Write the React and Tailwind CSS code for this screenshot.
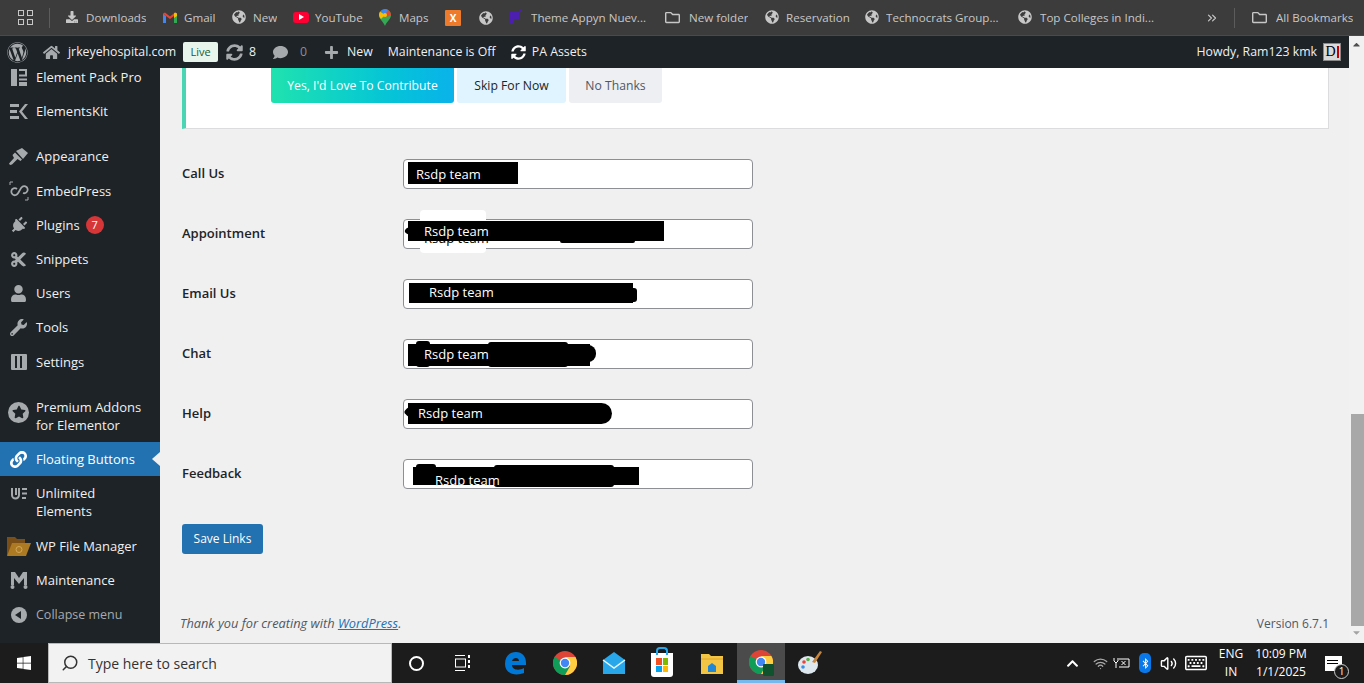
import React from 'react';
import {
  FaWordpress, FaPlug, FaCut, FaUser, FaWrench, FaLink, FaStar, FaPlus, FaComment, FaSyncAlt, FaHome, FaCaretUp, FaCaretDown, FaWindows, FaRegFolder, FaChevronUp, FaBluetoothB, FaRegKeyboard, FaGlobeAmericas, FaDownload,
} from 'react-icons/fa';
import { LuSearch, LuVolume2, LuChevronsRight, LuWifi } from 'react-icons/lu';

const font = 'font-["Open_Sans","Noto_Sans",sans-serif]';

function Globe() {
  return <FaGlobeAmericas className="text-[14px] text-[#c7c7c7] shrink-0" />;
}

function Chrome({ size = 24 }) {
  return (
    <svg width={size} height={size} viewBox="0 0 24 24">
      <circle cx="12" cy="12" r="12" fill="#db4437" />
      <path d="M12 12 1.6 6A12 12 0 0 0 12 24l5.2-9z" fill="#0f9d58" />
      <path d="M12 6h10.4A12 12 0 0 1 12 24l5.2-9z" fill="#ffcd40" />
      <circle cx="12" cy="12" r="5.4" fill="#fff" />
      <circle cx="12" cy="12" r="4.2" fill="#4285f4" />
    </svg>
  );
}

function Bookmarks() {
  const Item = ({ className, icon, text }) => (
    <div className={`flex items-center shrink-0 ${className}`}>
      {icon}
      {text && <span className="truncate">{text}</span>}
    </div>
  );
  return (
    <div className="h-9 bg-[#3c3c3c] border-b border-[#4a4a4a] flex items-center pl-[18px] text-[11.6px] text-[#c7c7c7]">
      <div className="grid grid-cols-2 gap-[3px] w-[15px] shrink-0">
        <span className="h-[6px] border border-[#c7c7c7]" />
        <span className="h-[6px] border border-[#c7c7c7]" />
        <span className="h-[6px] border border-[#c7c7c7]" />
        <span className="h-[6px] border border-[#c7c7c7]" />
      </div>
      <span className="w-px h-5 bg-[#5c5c5c] ml-4 mr-4 shrink-0" />
      <Item className="w-[97px] gap-[8px]" icon={<FaDownload className="text-[12px] shrink-0" />} text="Downloads" />
      <Item className="w-[69px] gap-[7px]" icon={
        <svg width="14" height="11" viewBox="0 0 14 11" className="shrink-0">
          <path d="M0 1.5V11h3V4z" fill="#4285f4" />
          <path d="M14 1.5V11h-3V4z" fill="#34a853" />
          <path d="M0 1.5 2 .5 7 4.5 12 .5 14 1.5 11 4 7 7 3 4z" fill="#ea4335" />
          <path d="M11 1.6 12 .5 14 1.5V4l-3 2z" fill="#fbbc04" />
        </svg>
      } text="Gmail" />
      <Item className="w-[61px] gap-[7px]" icon={<Globe />} text="New" />
      <Item className="w-[86px] gap-[6px]" icon={
        <span className="w-4 h-[11px] rounded-[3px] bg-[#ff0033] flex items-center justify-center shrink-0">
          <span className="border-l-[5px] border-l-white border-y-[3px] border-y-transparent" />
        </span>
      } text="YouTube" />
      <Item className="w-[66px] gap-[8px]" icon={
        <svg width="12" height="17" viewBox="0 0 12 17" className="shrink-0">
          <path d="M6 0a6 6 0 0 1 6 6c0 4-4 6-6 11C4 12 0 10 0 6a6 6 0 0 1 6-6z" fill="#34a853" />
          <path d="M1 2.5 6 6 2 10Q0 8 0 6q0-2 1-3.500z" fill="#fbbc04" />
          <path d="M1.500 2 6 0a6 6 0 0 1 3 1L6 6z" fill="#4285f4" />
          <path d="M9 1a6 6 0 0 1 3 5L8 8 6 6z" fill="#ea4335" />
          <circle cx="6" cy="6" r="2" fill="#fbbc04" />
        </svg>
      } text="Maps" />
      <Item className="w-[34px]" icon={
        <span className="w-4 h-4 bg-[#ee7a2b] rounded-[1px] flex items-center justify-center shrink-0 text-white text-[10px] font-bold leading-none">X</span>
      } />
      <Item className="w-[31px]" icon={<Globe />} />
      <Item className="w-[155px] gap-[9px]" icon={
        <svg width="12" height="14" viewBox="0 0 12 14" className="shrink-0">
          <path d="M0 2h9v7H4v5H0zM4 5v1h1V5z" fill="#4c1fb0" />
          <rect x="10" y="0" width="2" height="2" fill="#4c1fb0" />
        </svg>
      } text="Theme Appyn Nuev..." />
      <Item className="w-[100px] gap-[9px]" icon={<FaRegFolder className="text-[15px] shrink-0" />} text="New folder" />
      <Item className="w-[100px] gap-[7px]" icon={<Globe />} text="Reservation" />
      <Item className="w-[153px] gap-[7px]" icon={<Globe />} text="Technocrats Group..." />
      <Item className="w-[187px] gap-[8px]" icon={<Globe />} text="Top Colleges in Indi..." />
      <LuChevronsRight className="text-[14px] shrink-0" />
      <span className="w-px h-5 bg-[#5c5c5c] ml-[15px] mr-[17px] shrink-0" />
      <Item className="w-[106px] gap-[9px]" icon={<FaRegFolder className="text-[15px] shrink-0" />} text="All Bookmarks" />
    </div>
  );
}

function AdminBar() {
  return (
    <div className={`h-8 bg-[#1d2327] flex items-center text-[12.3px] text-[#f0f0f1] shrink-0 pr-[23px] whitespace-nowrap ${font}`}>
      <FaWordpress className="ml-[7px] text-[21px] text-[#a7aaad] shrink-0" />
      <FaHome className="ml-[15px] text-[17px] text-[#a7aaad] shrink-0" />
      <span className="ml-[8px] w-[109px]">jrkeyehospital.com</span>
      <span className="ml-[6px] w-[35px] h-[20px] rounded-[2px] bg-[#e8f5ec] text-[#1b5a2c] text-[11px] flex items-center justify-center">Live</span>
      <FaSyncAlt className="ml-[8px] text-[17px] text-[#a7aaad] shrink-0" />
      <span className="ml-[6px]">8</span>
      <FaComment className="ml-[17px] text-[15px] text-[#a7aaad] shrink-0" />
      <span className="ml-[12px] text-[#8c8f94]">0</span>
      <FaPlus className="ml-[17px] text-[15px] text-[#a7aaad] shrink-0" />
      <span className="ml-[8px]">New</span>
      <span className="ml-[15px] w-[109px]">Maintenance is Off</span>
      <FaSyncAlt className="ml-[14px] text-[15px] text-white shrink-0" />
      <span className="ml-[6px]">PA Assets</span>
      <span className="ml-auto mr-[6px]">Howdy, Ram123 kmk</span>
      <span className="w-[18px] h-[18px] bg-[#d9d9d9] border border-[#888] text-black font-['Liberation_Serif',serif] text-[14px] leading-none flex items-center justify-center">
        D<span className="w-[2px] h-3 bg-red-700 ml-px" />
      </span>
    </div>
  );
}

function MenuIcon({ children, className = '' }) {
  return <span className={`w-9 shrink-0 flex items-center justify-center text-[#a7aaad] text-[17px] pl-[1px] ${className}`}>{children}</span>;
}

function MenuItem({ icon, children, className = 'h-[34px]', iconClass, active }) {
  return (
    <div className={`relative flex items-center pr-1 text-[13px] leading-[18px] ${active ? 'bg-[#2271b1] text-white' : 'text-[#f0f0f1]'} ${className}`}>
      <MenuIcon className={iconClass}>{icon}</MenuIcon>
      <div>{children}</div>
      {active && <span className="absolute right-0 top-[10px] border-y-[7px] border-y-transparent border-r-[8px] border-r-[#f0f0f1]" />}
    </div>
  );
}

function Sidebar() {
  return (
    <aside className={`w-40 bg-[#1d2327] shrink-0 overflow-hidden ${font}`}>
      <div className="-mt-2">
        <MenuItem icon={
          <svg width="16" height="17" viewBox="0 0 16 17" fill="#a7aaad"><rect width="6" height="17" /><path d="M8 0h8v7.500H8V5.500h6V2H8zM8 9.500h8v2H8zM8 13h8v4H8z" /></svg>
        }>Element Pack Pro</MenuItem>
        <MenuItem icon={
          <svg width="18" height="15" viewBox="0 0 18 15" fill="#a7aaad"><rect width="9" height="3" /><rect y="6" width="7" height="3" /><rect y="12" width="9" height="3" /><path d="M15 0h3l-6 7.500 6 7.500h-3l-6-7.500z" /></svg>
        } className="h-[34px] mb-[11px]">ElementsKit</MenuItem>
        <MenuItem icon={
          <svg width="19" height="17" viewBox="0 0 19 17" fill="#a7aaad"><path d="M7 3 13 0l6 5-5 6z" /><path d="M6 4.500 13 11.500 11.500 13 8.500 11 3 16.500 1 17 0 15.500 5 10 3.500 7z" /></svg>
        }>Appearance</MenuItem>
        <MenuItem icon={
          <svg width="20" height="20" viewBox="0 0 20 20" fill="none" stroke="#a7aaad"><path d="M1 4V1h3M19 16v3h-3" /><path d="M8 8a3.500 3.500 0 1 0-1 6c3-1 4-7 6-8a3.500 3.500 0 1 1 1 6" strokeWidth="1.800" /></svg>
        } className="h-[34px] mt-px">EmbedPress</MenuItem>
        <MenuItem icon={<FaPlug className="rotate-45" />}>
          <span className="flex items-center gap-[6px]">Plugins<span className="w-[18px] h-[18px] rounded-full bg-[#d63638] text-white text-[11px] flex items-center justify-center">7</span></span>
        </MenuItem>
        <MenuItem icon={<FaCut />}>Snippets</MenuItem>
        <MenuItem icon={<FaUser />}>Users</MenuItem>
        <MenuItem icon={<FaWrench />}>Tools</MenuItem>
        <MenuItem icon={
          <span className="w-4 h-4 bg-[#a7aaad] rounded-[1px] flex items-center justify-center gap-[3px]"><span className="w-[2px] h-3 bg-[#1d2327]" /><span className="w-[2px] h-3 bg-[#1d2327]" /></span>
        } className="h-[34px] mt-px mb-[11px]">Settings</MenuItem>
        <MenuItem icon={
          <span className="w-[21px] h-[21px] rounded-full bg-[#a7aaad] flex items-center justify-center"><FaStar className="text-[#1d2327] text-[14px]" /></span>
        } iconClass="-mt-2" className="h-[52px]">Premium Addons<br />for Elementor</MenuItem>
        <MenuItem active icon={<FaLink className="text-white" />}>Floating Buttons</MenuItem>
        <MenuItem icon={
          <svg width="18" height="16" viewBox="0 0 18 16" fill="none" stroke="#a7aaad" strokeWidth="2"><path d="M2 2v7a3.500 3.500 0 0 0 7 0V2M6 2v7M12 3h5M12 7.500h5M12 12h4" /></svg>
        } iconClass="mt-[2px]" className="h-[52px] items-start pt-[8px]">Unlimited<br />Elements</MenuItem>
        <MenuItem icon={
          <svg width="24" height="20" viewBox="0 0 24 20"><path d="M0 1h8l2 2h8v16H0z" fill="#7a4f17" /><path d="M5 7h19l-5 13H0z" fill="#ab7a22" /><circle cx="12" cy="13.500" r="3" fill="none" stroke="#d3a95c" /></svg>
        } className="h-[34px] mt-px">WP File Manager</MenuItem>
        <MenuItem icon={
          <svg width="18" height="18" viewBox="0 0 18 18" fill="#a7aaad"><path d="M1 1h4l4 6 4-6h4v13h-3V7l-5 6-5-6v7H1z" /><circle cx="15.500" cy="16" r="2" /><circle cx="2.500" cy="16" r="2" /></svg>
        }>Maintenance</MenuItem>
        <div className="h-[34px] mt-px flex items-center text-[12.500px] text-[#a7aaad]">
          <MenuIcon>
            <span className="w-4 h-4 rounded-full bg-[#a7aaad] flex items-center justify-center">
              <span className="border-y-[4px] border-y-transparent border-r-[6px] border-r-[#1d2327] mr-px" />
            </span>
          </MenuIcon>
          Collapse menu
        </div>
      </div>
    </aside>
  );
}

function Notice() {
  return (
    <div className="h-[61px] bg-white border-l-4 border-l-[#4ad6b5] border-b border-b-[#dcdcde] border-r border-r-[#dcdcde] flex items-start pl-[85px] gap-[3px] text-[12.2px]">
      <button className="w-[183px] h-[35px] pt-px rounded-b-[3px] bg-linear-to-r from-[#20e2ae] to-[#0bb2ea] text-white">Yes, I'd Love To Contribute</button>
      <button className="w-[109px] h-[35px] pt-px rounded-b-[3px] bg-[#dff4fe] text-[#1d2327]">Skip For Now</button>
      <button className="w-[93px] h-[35px] pt-px rounded-b-[3px] bg-[#eeeff3] text-[#50575e]">No Thanks</button>
    </div>
  );
}

// black marker strokes laid over the inputs in the screenshot
function Redact({ className, textClass }) {
  return (
    <div className={`absolute bg-black text-white text-[13px] leading-none ${className}`}>
      <span className={`absolute whitespace-nowrap ${textClass}`}>Rsdp team</span>
    </div>
  );
}

function Blob({ className }) {
  return <div className={`absolute bg-black rounded-[3px] ${className}`} />;
}

function Field({ label, children }) {
  return (
    <div className="flex items-center h-[30px] mb-[30px]">
      <label className="w-[221px] text-[13px] font-semibold text-[#1d2327]">{label}</label>
      <div className="relative w-[350px] h-[30px] bg-white border border-[#8c8f94] rounded-[4px]">{children}</div>
    </div>
  );
}

function Content() {
  return (
    <main className={`flex-1 min-w-0 bg-[#f0f0f1] pl-[22px] pr-[20px] flex flex-col ${font}`}>
      <Notice />
      <div className="mt-[30px]">
        <Field label="Call Us">
          <Redact className="left-[4px] top-[2px] w-[110px] h-[22px]" textClass="left-[8px] top-[6px]" />
        </Field>
        <Field label="Appointment">
          <div className="absolute left-[16px] -top-[10px] w-[66px] h-[43px] bg-white rounded-[4px]" />
          <span className="absolute left-[20px] top-[12px] text-[13px] leading-none text-black whitespace-nowrap">Rsdp team</span>
          <Blob className="left-[1px] top-[8px] w-[6px] h-[6px] rotate-45" />
          <Blob className="left-[156px] top-[19px] w-[75px] h-[4px]" />
          <Redact className="left-[4px] top-[1px] w-[256px] h-[20px]" textClass="left-[16px] top-[4px]" />
        </Field>
        <Field label="Email Us">
          <Blob className="left-[225px] top-[8px] w-[8px] h-[14px]" />
          <Redact className="left-[5px] top-[3px] w-[224px] h-[20px]" textClass="left-[20px] top-[3px]" />
        </Field>
        <Field label="Chat">
          <Blob className="left-[12px] top-[1px] w-[14px] h-[26px]" />
          <Blob className="left-[84px] top-[2px] w-[80px] h-[25px]" />
          <Blob className="left-[176px] top-[5px] w-[16px] h-[17px] rounded-full" />
          <Redact className="left-[4px] top-[4px] w-[182px] h-[22px]" textClass="left-[16px] top-[4px]" />
        </Field>
        <Field label="Help">
          <Blob className="left-[1px] top-[8px] w-[8px] h-[8px] rotate-45" />
          <Blob className="left-[180px] top-[3px] w-[28px] h-[21px] rounded-full" />
          <Redact className="left-[4px] top-[3px] w-[192px] h-[21px]" textClass="left-[10px] top-[4px]" />
        </Field>
        <Field label="Feedback">
          <Blob className="left-[12px] top-[4px] w-[20px] h-[6px]" />
          <Blob className="left-[90px] top-[5px] w-[120px] h-[22px]" />
          <Redact className="left-[9px] top-[7px] w-[226px] h-[18px]" textClass="left-[22px] top-[7px]" />
        </Field>
      </div>
      <button className="w-[81px] h-[30px] rounded-[3px] bg-[#2271b1] text-white text-[12px] mt-[5px]">Save Links</button>
      <div className="mt-[60px] -ml-[2px] flex justify-between items-center text-[12px] text-[#50575e]">
        <span className="italic text-[12.800px]">Thank you for creating with <span className="text-[#2271b1] underline">WordPress</span>.</span>
        <span>Version 6.7.1</span>
      </div>
    </main>
  );
}

function Scrollbar() {
  return (
    <div className="w-[15px] shrink-0 -mt-8 bg-[#f1f1f1] flex flex-col items-center relative">
      <FaCaretUp className="absolute top-[3px] text-[11px] text-[#505050]" />
      <div className="absolute left-[2px] right-0 top-[378px] h-[212px] bg-[#a8a8a8]" />
      <FaCaretDown className="absolute bottom-[5px] text-[11px] text-[#a3a3a3]" />
    </div>
  );
}

function Taskbar() {
  return (
    <div className={`h-10 bg-[#1c1c1c] flex items-center text-white shrink-0 ${font}`}>
      <div className="w-12 flex justify-center"><FaWindows className="text-[16px]" /></div>
      <div className="w-[344px] h-10 bg-[#f2f2f2] border border-[#b8b8b8] flex items-center pl-[12px] gap-[9px] text-[14px] text-[#333]">
        <LuSearch className="text-[18px] -scale-x-100" />
        Type here to search
      </div>
      <span className="ml-[17px] w-[15px] h-[15px] rounded-full border-2 border-white shrink-0" />
      <svg className="ml-[30px] shrink-0" width="18" height="18" viewBox="0 0 18 18" fill="none" stroke="#fff"><path d="M1 1.500h10M1 16.500h10" /><rect x="1.500" y="5" width="10" height="8" /><path d="M15 1v3M15 6v3M15 11v3" strokeWidth="2" /></svg>
      <svg className="ml-[32px] shrink-0" width="22" height="24" viewBox="0 0 22 24"><path d="M1 13C1 5 6 1 12 1c6 0 10 4 10 11v2H8c0 5 7 6 12 3v5c-7 3-19 2-19-9zm7-3h7c0-4-6-4-7 0z" fill="#0078d7" /></svg>
      <span className="ml-[27px] shrink-0"><Chrome /></span>
      <svg className="ml-[25px] shrink-0" width="24" height="24" viewBox="0 0 24 24"><path d="M1 9 12 1l11 8v14H1z" fill="#28a8ea" /><path d="M1 9l11 8 11-8" fill="none" stroke="#e6f6ff" strokeWidth="1.500" /></svg>
      <span className="ml-[25px] shrink-0 relative w-[22px] h-[24px] bg-white rounded-b-[3px] mt-1 grid grid-cols-2 gap-px p-[5px]">
        <span className="absolute -top-[6px] left-[5px] w-3 h-2 border-2 border-[#28a8ea] border-b-0 rounded-t" />
        <span className="bg-[#f25022]" /><span className="bg-[#7fba00]" /><span className="bg-[#00a4ef]" /><span className="bg-[#ffb900]" />
      </span>
      <svg className="ml-[28px] shrink-0" width="22" height="22" viewBox="0 0 22 22"><path d="M0 2h8l2 2h12v18H0z" fill="#f3c545" /><path d="M0 7h22" stroke="#e2a52a" /><path d="M7 20v-6l4-3 4 3v6z" fill="#1f87d8" /></svg>
      <div className="ml-[14px] w-[48px] h-10 bg-[#4b4b4b] border-b-[3px] border-b-[#76b9ed] flex items-center justify-center shrink-0 relative">
        <Chrome />
        <span className="absolute left-[26px] top-[21px] w-[11px] h-[12px] bg-[#10512e] rounded-[1px]" />
      </div>
      <svg className="ml-[12px] shrink-0" width="26" height="26" viewBox="0 0 26 26"><ellipse cx="11" cy="15" rx="10" ry="9" fill="#dfe7ee" /><circle cx="7" cy="12" r="1.800" fill="#e9443b" /><circle cx="11" cy="9.500" r="1.800" fill="#57b04a" /><circle cx="6" cy="17" r="1.800" fill="#3a8ee6" /><path d="M23 1l2 1-7 11-3-1z" fill="#c8853c" /></svg>
      <div className="ml-auto flex items-center h-10 text-[12px] leading-[18px]">
        <FaChevronUp className="text-[13px] mr-[14px]" />
        <LuWifi className="text-[15px] text-[#aaa] mr-[5px]" />
        <svg className="mr-[9px]" width="17" height="12" viewBox="0 0 17 12" fill="none" stroke="#fff"><path d="M1 1v3l2 2 2-2V1M3 6v5M6 2h10v8H6" /><path d="M8.500 4l4 4M12.500 4l-4 4" /></svg>
        <span className="w-3 h-5 bg-[#0a78e8] rounded-[5px] flex items-center justify-center mr-[9px]"><FaBluetoothB className="text-[11px]" /></span>
        <LuVolume2 className="text-[17px] mr-[8px]" />
        <FaRegKeyboard className="text-[22px] mr-[9px]" />
        <div className="w-[30px] text-center mr-[5px]">ENG<br />IN</div>
        <div className="w-[60px] text-center mr-[14px]">10:09 PM<br />1/1/2025</div>
        <span className="relative w-[17px] h-[15px] bg-white mr-[22px]">
          <span className="absolute left-[2px] top-[4px] w-[11px] h-px bg-black" />
          <span className="absolute left-[2px] top-[7px] w-[11px] h-px bg-black" />
          <span className="absolute -right-[7px] -bottom-[8px] w-[15px] h-[15px] rounded-full bg-[#1c1c1c] border border-[#ccc] text-[10px] leading-none flex items-center justify-center">1</span>
        </span>
      </div>
    </div>
  );
}

export default function App() {
  return (
    <div className="h-[683px] w-[1364px] overflow-hidden flex flex-col font-['Open_Sans',sans-serif]">
      <Bookmarks />
      <AdminBar />
      <div className="flex-1 flex min-h-0 relative">
        <Sidebar />
        <Content />
        <Scrollbar />
      </div>
      <Taskbar />
    </div>
  );
}
